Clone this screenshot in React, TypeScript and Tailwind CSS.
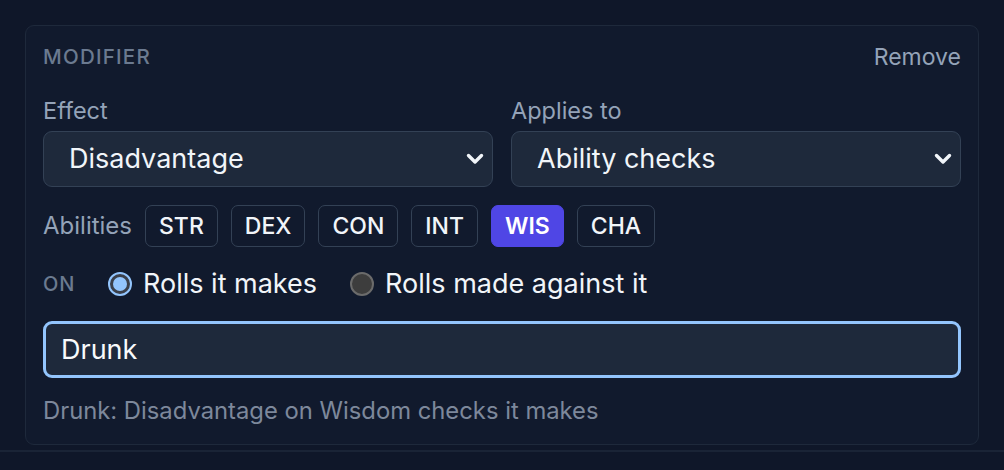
import React, { useState } from 'react'

const abilities = ['STR', 'DEX', 'CON', 'INT', 'WIS', 'CHA']

const Chevron = () => (
  <svg width="18" height="12" viewBox="0 0 18 12" fill="none" className="text-[#f1f5f9]">
    <polyline points="2.5,2.5 9,9 15.5,2.5" stroke="currentColor" strokeWidth="3.4" strokeLinecap="round" strokeLinejoin="round" />
  </svg>
)

const Select = ({ value }: { value: string }) => (
  <div className="flex h-[56px] w-full items-center rounded-[9px] border border-[#334155] bg-[#1e293b] pl-[25px] pr-[8px]">
    <span className="flex-1 text-[27px] text-[#f1f5f9]">{value}</span>
    <Chevron />
  </div>
)

const Radio = ({ checked }: { checked: boolean }) =>
  checked ? (
    <span className="flex size-[24px] items-center justify-center rounded-full border-2 border-[#93c5fd] bg-[#3a3f4a]">
      <span className="size-[14px] rounded-full bg-[#93c5fd]" />
    </span>
  ) : (
    <span className="size-[24px] rounded-full border-2 border-[#6b6b6b] bg-[#3d3d3d]" />
  )

export default function App() {
  const [selected, setSelected] = useState('WIS')
  const [target, setTarget] = useState<'makes' | 'against'>('makes')

  return (
    <div
      className="min-h-[470px] bg-[#0f1729] pt-[25px]"
      style={{ fontFamily: 'Inter, "Noto Sans", sans-serif' }}
    >
      <div className="mx-[25px] rounded-[9px] border border-[#1e293b] bg-[#111a2d] px-[17px] pb-[19px] pt-[16px]">
        {/* Header */}
        <div className="flex h-[30px] items-center justify-between">
          <span className="text-[20.5px] font-medium uppercase tracking-[0.06em] text-[#6b7a90]">
            Modifier
          </span>
          <button className="text-[23px] text-[#94a3b8]">Remove</button>
        </div>

        {/* Effect / Applies to */}
        <div className="mt-[24px] grid grid-cols-2 gap-[18px]">
          <div>
            <div className="mb-[5px] h-[30px] text-[23.5px] leading-[30px] text-[#94a3b8]">Effect</div>
            <Select value="Disadvantage" />
          </div>
          <div>
            <div className="mb-[5px] h-[30px] text-[23.5px] leading-[30px] text-[#94a3b8]">Applies to</div>
            <Select value="Ability checks" />
          </div>
        </div>

        {/* Abilities */}
        <div className="mt-[18px] flex h-[42px] items-center gap-[13px]">
          <span className="text-[24px] text-[#94a3b8]">Abilities</span>
          {abilities.map((a) => (
            <button
              key={a}
              onClick={() => setSelected(a)}
              className={`flex h-[42px] items-center rounded-[7px] border px-[13px] text-[23px] ${
                selected === a
                  ? 'border-[#4f46e5] bg-[#4f46e5] font-semibold text-white'
                  : 'border-[#334155] bg-transparent font-medium text-[#f1f5f9]'
              }`}
            >
              {a}
            </button>
          ))}
        </div>

        {/* ON */}
        <div className="mt-[21px] flex h-[32px] items-center">
          <span className="w-[65px] text-[20px] font-medium tracking-[0.04em] text-[#6b7a90]">ON</span>
          <label className="flex cursor-pointer items-center gap-[11px]" onClick={() => setTarget('makes')}>
            <Radio checked={target === 'makes'} />
            <span className="text-[27px] text-[#f1f5f9]">Rolls it makes</span>
          </label>
          <label className="ml-[33px] flex cursor-pointer items-center gap-[11px]" onClick={() => setTarget('against')}>
            <Radio checked={target === 'against'} />
            <span className="text-[27px] text-[#f1f5f9]">Rolls made against it</span>
          </label>
        </div>

        {/* Name input */}
        <input
          defaultValue="Drunk"
          className="mt-[21px] block h-[57px] w-full rounded-[9px] border-[3px] border-[#93c5fd] bg-[#1e293b] px-[15px] text-[27px] text-[#f8fafc] outline-none"
        />

        {/* Summary */}
        <p className="mt-[19px] text-[23.8px] leading-[28px] text-[#7d889b]">
          Drunk: Disadvantage on Wisdom checks it makes
        </p>
      </div>
      <div className="mt-[5px] h-[20px] border-t-2 border-[#1a2436]" />
    </div>
  )
}
